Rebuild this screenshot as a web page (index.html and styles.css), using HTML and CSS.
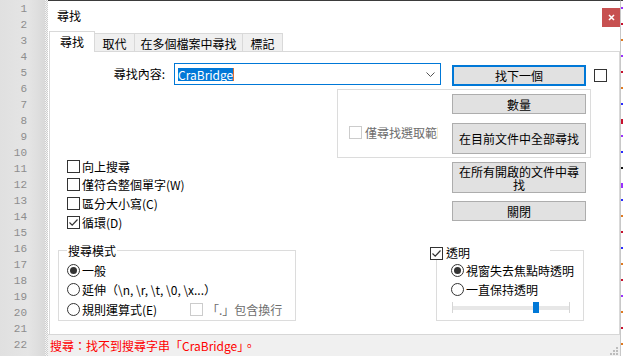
FILE: index.html
```html
<!DOCTYPE html>
<html lang="zh-Hant">
<head>
    <meta charset="UTF-8">
    <title>尋找</title>
    <link rel="stylesheet" href="styles.css">
</head>
<body>

<div class="gutter">
    <div class="numbers">
        <div>1</div><div>2</div><div>3</div><div>4</div><div>5</div><div>6</div>
        <div>7</div><div>8</div><div>9</div><div>10</div><div>11</div><div>12</div>
        <div>13</div><div>14</div><div>15</div><div>16</div><div>17</div><div>18</div>
        <div>19</div><div>20</div><div>21</div><div>22</div>
    </div>
    <div class="fold"></div>
</div>

<div class="dialog">
    <div class="titlebar">
        <span class="title">尋找</span>
        <span class="close">
            <svg width="7" height="7" viewBox="0 0 7 7"><path d="M1 1L6 6M6 1L1 6" stroke="#fff" stroke-width="1.6"/></svg>
        </span>
    </div>

    <div class="tabs">
        <div class="tab active">尋找</div>
        <div class="tab t-replace">取代</div>
        <div class="tab t-files">在多個檔案中尋找</div>
        <div class="tab t-mark">標記</div>
    </div>

    <div class="panel">
        <div class="find-row">
            <label class="find-label">尋找內容:</label>
            <div class="combo">
                <span class="sel">CraBridge</span>
                <svg class="chev" width="9" height="5" viewBox="0 0 9 5"><path d="M0.5 0.5L4.5 4.5L8.5 0.5" fill="none" stroke="#555" stroke-width="1"/></svg>
            </div>
            <button class="btn default">找下一個</button>
            <span class="box side"></span>
        </div>

        <div class="mid">
            <div class="options">
                <div class="opt"><span class="box"></span>向上搜尋</div>
                <div class="opt"><span class="box"></span>僅符合整個單字(W)</div>
                <div class="opt"><span class="box"></span>區分大小寫(C)</div>
                <div class="opt"><span class="box on"><svg width="11" height="11" viewBox="0 0 11 11"><path d="M1.5 5.5L4.2 8.2L9.5 2.5" fill="none" stroke="#333" stroke-width="1.2"/></svg></span>循環(D)</div>
            </div>

            <div class="actions">
                <div class="scope">
                    <div class="scope-opt"><span class="box off"></span><span class="dim">僅尋找選取範圍</span></div>
                    <div class="btn-col">
                        <button class="btn">數量</button>
                        <button class="btn tall">在目前文件中全部尋找</button>
                    </div>
                </div>
                <button class="btn tall all-docs">在所有開啟的文件中尋找</button>
                <button class="btn close-btn">關閉</button>
            </div>
        </div>

        <div class="groups">
            <fieldset class="mode">
                <legend>搜尋模式</legend>
                <div class="opt radio-row"><span class="radio on"></span>一般</div>
                <div class="opt radio-row"><span class="radio"></span>延伸（\n, \r, \t, \0, \x...）</div>
                <div class="opt radio-row">
                    <span class="regex"><span class="radio"></span>規則運算式(E)</span>
                    <span class="box off"></span><span class="dim">「.」包含換行</span>
                </div>
            </fieldset>

            <fieldset class="trans">
                <legend>
                    <span class="box on"><svg width="11" height="11" viewBox="0 0 11 11"><path d="M1.5 5.5L4.2 8.2L9.5 2.5" fill="none" stroke="#333" stroke-width="1.2"/></svg></span>
                    <span class="legend-text">透明</span>
                </legend>
                <div class="opt radio-row"><span class="radio on"></span>視窗失去焦點時透明</div>
                <div class="opt radio-row"><span class="radio"></span>一直保持透明</div>
                <div class="slider"><div class="thumb"></div></div>
            </fieldset>
        </div>
    </div>

    <div class="status">
        <span>搜尋：找不到搜尋字串「CraBridge」。</span>
        <svg class="grip" width="8" height="8" viewBox="0 0 8 8">
            <rect x="6" y="0" width="2" height="2" fill="#bdbdbd"/>
            <rect x="3" y="3" width="2" height="2" fill="#bdbdbd"/>
            <rect x="6" y="3" width="2" height="2" fill="#bdbdbd"/>
            <rect x="0" y="6" width="2" height="2" fill="#bdbdbd"/>
            <rect x="3" y="6" width="2" height="2" fill="#bdbdbd"/>
            <rect x="6" y="6" width="2" height="2" fill="#bdbdbd"/>
        </svg>
    </div>
</div>

<div class="edge">
    <div class="ln"><span class="mk purple"></span></div>
    <div class="ln"><span class="mk red"></span></div>
    <div class="ln"><span class="mk orange"></span></div>
    <div class="ln"><span class="mk purple"></span></div>
    <div class="ln"><span class="mk red"></span></div>
    <div class="ln"><span class="mk orange"></span></div>
    <div class="ln"><span class="mk blue"></span></div>
    <div class="ln"><span class="mk red tall"></span></div>
    <div class="ln"><span class="mk purple"></span></div>
    <div class="ln"><span class="mk blue"></span></div>
    <div class="ln"><span class="mk dark"></span></div>
    <div class="ln"><span class="mk purple tall"></span></div>
    <div class="ln"><span class="mk blue"></span></div>
    <div class="ln"><span class="mk orange"></span></div>
    <div class="ln"><span class="mk red"></span></div>
    <div class="ln"><span class="mk blue"></span></div>
    <div class="ln"><span class="mk orange"></span></div>
    <div class="ln"><span class="mk red"></span></div>
    <div class="ln"><span class="mk purple"></span></div>
    <div class="ln"><span class="mk orange"></span></div>
    <div class="ln"><span class="mk red"></span></div>
    <div class="ln"><span class="mk orange"></span></div>
</div>

</body>
</html>
```

FILE: styles.css
```css
* {
    box-sizing: border-box;
}
html, body {
    margin: 0;
}
body {
    width: 623px;
    height: 356px;
    overflow: hidden;
    display: flex;
    font-family: "Noto Sans CJK TC", "Noto Sans", sans-serif;
    font-size: 12px;
    color: #000;
    background: #fff;
}

/* editor gutter */
.gutter {
    width: 48px;
    display: flex;
    background: linear-gradient(to right, #e0e0e0 0, #e5e5e5 28px, #d9d9d9 45px);
}
.numbers {
    width: 45px;
    padding: 1px 18px 0 0;
    text-align: right;
    font-family: "Liberation Mono", monospace;
    font-size: 11px;
    color: #8d8d8d;
}
.numbers div {
    height: 16px;
    line-height: 16px;
}
.fold {
    width: 3px;
    background: repeating-conic-gradient(#cfcfcf 0 25%, #f4f4f4 0 50%) 0 0 / 2px 2px;
}

/* dialog */
.dialog {
    width: 572px;
    display: flex;
    flex-direction: column;
    border-top: 1px solid #3b3b3b;
    background: #fff;
}
.titlebar {
    height: 30px;
    display: flex;
    justify-content: space-between;
    align-items: flex-start;
}
.title {
    margin: 8px 0 0 9px;
    line-height: 14px;
}
.close {
    margin-top: 7px;
    width: 18px;
    height: 19px;
    background: #c75050;
    display: flex;
    align-items: center;
    justify-content: center;
}

.tabs {
    height: 20px;
    display: flex;
    align-items: flex-end;
    padding-left: 1px;
}
.tab {
    height: 18px;
    padding-top: 2px;
    line-height: 15px;
    text-align: center;
    background: #f0f0f0;
    border-top: 1px solid #d9d9d9;
    border-left: 1px solid #d9d9d9;
}
.tab.active {
    position: relative;
    z-index: 1;
    width: 46px;
    height: 21px;
    margin-bottom: -1px;
    padding-top: 1px;
    line-height: 17px;
    background: #fff;
    border-right: 1px solid #d9d9d9;
}
.t-replace {
    width: 39px;
    border-left: 0;
}
.t-files {
    width: 108px;
}
.t-mark {
    width: 41px;
    border-right: 1px solid #d9d9d9;
}

.panel {
    flex: 1;
    margin-left: 1px;
    border: 1px solid #d9d9d9;
    border-bottom: 0;
}

/* first row */
.find-row {
    display: flex;
    align-items: flex-start;
    margin-top: 11px;
}
.find-label {
    display: block;
    width: 117px;
    padding-right: 2px;
    line-height: 22px;
    text-align: right;
}
.combo {
    width: 267px;
    height: 22px;
    margin-left: 7px;
    padding: 0 4px 0 3px;
    border: 1px solid #0078d7;
    display: flex;
    align-items: center;
    justify-content: space-between;
}
.sel {
    line-height: 13px;
    background: #0078d7;
    color: #fff;
    border-right: 1px solid #e07030;
}
.chev {
    margin-right: 1px;
}

.btn {
    display: block;
    width: 134px;
    height: 20px;
    padding: 0 5px;
    font: inherit;
    line-height: 13px;
    color: #000;
    background: #e1e1e1;
    border: 1px solid #adadad;
}
.btn.default {
    height: 21px;
    margin: 2px 0 0 11px;
    border: 2px solid #0078d7;
}
.btn.tall {
    height: 31px;
}

.box {
    flex: none;
    width: 13px;
    height: 13px;
    border: 1px solid #333;
    background: #fff;
    display: flex;
    align-items: center;
    justify-content: center;
}
.box.side {
    margin: 6px 0 0 8px;
}
.box.off {
    border-color: #cccccc;
}
.radio {
    flex: none;
    width: 13px;
    height: 13px;
    border: 1px solid #333;
    border-radius: 50%;
    background: #fff;
    display: flex;
    align-items: center;
    justify-content: center;
}
.radio.on::after {
    content: "";
    width: 7px;
    height: 7px;
    border-radius: 50%;
    background: #333;
}
.dim {
    color: #6d6d6d;
}

/* middle block */
.mid {
    display: flex;
    margin-top: 3px;
}
.options {
    width: 287px;
    padding: 68px 0 0 17px;
}
.opt {
    height: 18.67px;
    display: flex;
    align-items: center;
    white-space: nowrap;
}
.opt .box, .opt .radio {
    margin-right: 2px;
}
.actions {
    width: 254px;
    display: flex;
    flex-direction: column;
}
.scope {
    height: 69px;
    display: flex;
    padding: 4px 4px 0 11px;
    border: 1px solid #dcdcdc;
}
.scope-opt {
    width: 89px;
    height: 13px;
    margin-top: 32px;
    display: flex;
    align-items: center;
    overflow: hidden;
    white-space: nowrap;
}
.scope-opt .box {
    margin-right: 3px;
}
.btn-col {
    margin-left: auto;
    display: flex;
    flex-direction: column;
    gap: 9px;
}
.all-docs {
    margin: 4px 0 0 115px;
}
.close-btn {
    margin: 8px 0 0 115px;
}

/* bottom groups */
.groups {
    display: flex;
    align-items: flex-start;
    margin-top: 12px;
    padding-left: 8px;
}
fieldset {
    margin: 0;
    height: 77px;
    border: 1px solid #dcdcdc;
    min-width: 0;
}
.mode {
    width: 238px;
    padding: 4px 0 0 8px;
}
.mode legend {
    padding: 0 1px;
    line-height: 13px;
}
.radio-row {
    height: 19.5px;
}
.regex {
    width: 123px;
    display: flex;
    align-items: center;
}
.regex .radio {
    margin-right: 2px;
}
.radio-row .box.off {
    margin-right: 4px;
}

.trans {
    width: 148px;
    margin-left: 140px;
    padding: 4px 0 0 14px;
}
.trans legend {
    width: 120px;
    height: 13px;
    margin-left: -21px;
    padding: 0;
    display: flex;
    align-items: flex-start;
    background: #fff;
}
.trans legend .box {
    margin: 3px 3px 0 0;
}
.legend-text {
    margin-top: 2px;
    line-height: 13px;
}
.slider {
    width: 118px;
    height: 11px;
    margin: 2px 0 0 1px;
    background: linear-gradient(#e7e7e7, #e7e7e7) 0 4px / 100% 4px no-repeat;
    border-left: 1px solid #d6d6d6;
    border-right: 1px solid #d6d6d6;
}
.thumb {
    width: 6px;
    height: 11px;
    margin-left: 80px;
    background: #0078d7;
}

/* status bar */
.status {
    height: 22px;
    padding-left: 2px;
    line-height: 21px;
    color: #ff0000;
    background: #f0f0f0;
    border-top: 1px solid #d7d7d7;
    display: flex;
    justify-content: space-between;
}
.grip {
    align-self: flex-end;
    margin: 0 2px 1px 0;
}

/* editor text peeking at the right */
.edge {
    width: 3px;
    border-top: 1px solid #3b3b3b;
    border-left: 1px solid #c8c8c8;
    background: #fff;
}
.ln {
    height: 16px;
    padding-top: 6px;
}
.mk {
    display: block;
    width: 2px;
    height: 2px;
}
.mk.tall {
    height: 5px;
}
.purple { background: #9b30ff; }
.red { background: #c8102e; }
.orange { background: #e07a1f; }
.blue { background: #2a2aff; }
.dark { background: #111; }
```
